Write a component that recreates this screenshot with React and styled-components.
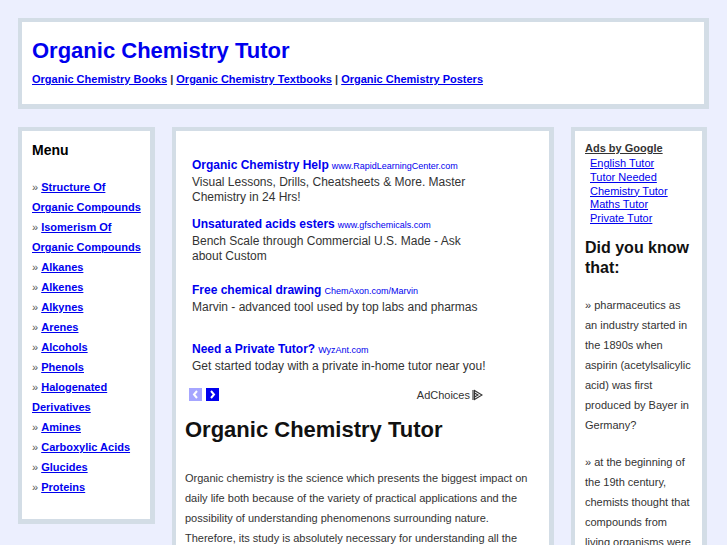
import React from "react";
import styled, { createGlobalStyle } from "styled-components";

const GlobalStyle = createGlobalStyle`
  body {
    margin: 0;
    background: #eceffe;
    font-family: "Liberation Sans", Arial, sans-serif;
    color: #333;
  }
`;

const Page = styled.div`
  width: 691px;
  padding: 18px 0 0 18px;
`;

const Box = styled.div`
  background: #fff;
  border: 5px solid #d3dde6;
  border-top-width: 4px;
  border-left-width: 4px;
`;

const Header = styled(Box)`
  box-sizing: border-box;
  height: 91px;
  padding: 14px 10px 0 10px;
`;

const SiteTitle = styled.h1`
  margin: 0;
  font-size: 22px;
  line-height: 30px;
  font-weight: bold;
  color: #0000ee;
`;

const TopLinks = styled.div`
  margin-top: 7px;
  font-size: 11px;
  font-weight: bold;
  color: #333;
`;

const BlueLink = styled.a`
  color: #0000ee;
  text-decoration: underline;
  font-weight: ${props => (props.plain ? "normal" : "bold")};
`;

const Columns = styled.div`
  display: flex;
  align-items: flex-start;
  gap: 17px;
  margin-top: 18px;
`;

const Sidebar = styled(Box)`
  width: 116px;
  padding: 8px 2px 22px 10px;
`;

const MenuTitle = styled.h3`
  margin: 0;
  font-size: 14px;
  line-height: 22px;
  color: #000;
`;

const MenuList = styled.div`
  margin-top: 16px;
  font-size: 11px;
  line-height: 20px;
`;

const MenuItem = styled.div`
  font-weight: bold;
  &::before {
    content: "» ";
    color: #555;
    font-weight: normal;
  }
`;

const Main = styled(Box)`
  width: 364px;
  height: 420px;
  padding: 15px 0 0 9px;
`;

const AdUnit = styled.div`
  width: 300px;
  padding-top: 5px;
`;

const AdCell = styled.div`
  height: 59px;
  display: flex;
  flex-direction: column;
  justify-content: center;
  padding-left: 7px;
`;

const AdTitle = styled.div`
  font-size: 12px;
  line-height: 17px;
  font-weight: bold;
  color: #0000ee;
  white-space: nowrap;
`;

const AdUrl = styled.span`
  font-size: 9px;
  font-weight: normal;
  color: #0000ee;
  margin-left: 3px;
`;

const AdText = styled.div`
  font-size: 12px;
  line-height: 15px;
  color: #333;
  width: 295px;
`;

const AdFooter = styled.div`
  display: flex;
  align-items: center;
  justify-content: space-between;
  padding: 0 0 0 4px;
  margin-top: 1px;
`;

const Arrows = styled.div`
  display: flex;
  gap: 4px;
`;

const ArrowBox = styled.span`
  width: 13px;
  height: 13px;
  display: flex;
  align-items: center;
  justify-content: center;
  background: ${props => (props.disabled ? "#a6a6ff" : "#0000ee")};
`;

const AdChoices = styled.span`
  display: flex;
  align-items: center;
  gap: 2px;
  font-size: 11px;
  color: #333;
  padding-right: 2px;
`;

const PageTitle = styled.h2`
  margin: 14px 0 0 0;
  font-size: 22px;
  line-height: 30px;
  color: #111;
`;

const BodyText = styled.p`
  margin: 23px 0 0 0;
  font-size: 11px;
  line-height: 20px;
  color: #333;
  width: 350px;
`;

const RightBar = styled(Box)`
  width: 117px;
  height: 420px;
  padding: 10px 0 0 10px;
`;

const AdsHead = styled.div`
  font-size: 11px;
  font-weight: bold;
  text-decoration: underline;
  color: #333;
  line-height: 14px;
`;

const AdLinks = styled.div`
  display: flex;
  flex-direction: column;
  margin-top: 2px;
  padding-left: 5px;
  font-size: 11px;
  line-height: 13.75px;
`;

const KnowTitle = styled.h3`
  margin: 12px 0 0 0;
  font-size: 16px;
  line-height: 20px;
  color: #111;
`;

const Fact = styled.p`
  margin: 17px 0 0 0;
  width: 109px;
  font-size: 11px;
  line-height: 20px;
  color: #333;
  &::before {
    content: "» ";
  }
`;

const Chevron = ({ left }) => (
  <svg width="7" height="9" viewBox="0 0 7 9">
    <path
      d={left ? "M5 1 L2 4.5 L5 8" : "M2 1 L5 4.5 L2 8"}
      stroke="#fff"
      strokeWidth="2"
      fill="none"
    />
  </svg>
);

const AdChoicesIcon = () => (
  <svg width="11" height="12" viewBox="0 0 11 12">
    <path d="M1 1 V11 M2.5 1.5 L10 6 L2.5 10.5 Z M2.5 4 L6 6 L2.5 8" stroke="#333" strokeWidth="1.1" fill="none" />
  </svg>
);

const menu = [
  "Structure Of Organic Compounds",
  "Isomerism Of Organic Compounds",
  "Alkanes",
  "Alkenes",
  "Alkynes",
  "Arenes",
  "Alcohols",
  "Phenols",
  "Halogenated Derivatives",
  "Amines",
  "Carboxylic Acids",
  "Glucides",
  "Proteins"
];

const ads = [
  {
    title: "Organic Chemistry Help",
    url: "www.RapidLearningCenter.com",
    text: "Visual Lessons, Drills, Cheatsheets & More. Master Chemistry in 24 Hrs!"
  },
  {
    title: "Unsaturated acids esters",
    url: "www.gfschemicals.com",
    text: "Bench Scale through Commercial U.S. Made - Ask about Custom"
  },
  {
    title: "Free chemical drawing",
    url: "ChemAxon.com/Marvin",
    text: "Marvin - advanced tool used by top labs and pharmas"
  },
  {
    title: "Need a Private Tutor?",
    url: "WyzAnt.com",
    text: "Get started today with a private in-home tutor near you!"
  }
];

const tutorLinks = [
  "English Tutor",
  "Tutor Needed",
  "Chemistry Tutor",
  "Maths Tutor",
  "Private Tutor"
];

const App = () => {
  return (
    <Page>
      <GlobalStyle />
      <Header>
        <SiteTitle>Organic Chemistry Tutor</SiteTitle>
        <TopLinks>
          <BlueLink href="#">Organic Chemistry Books</BlueLink> |{" "}
          <BlueLink href="#">Organic Chemistry Textbooks</BlueLink> |{" "}
          <BlueLink href="#">Organic Chemistry Posters</BlueLink>
        </TopLinks>
      </Header>
      <Columns>
        <Sidebar>
          <MenuTitle>Menu</MenuTitle>
          <MenuList>
            {menu.map(item => (
              <MenuItem key={item}>
                <BlueLink href="#">{item}</BlueLink>
              </MenuItem>
            ))}
          </MenuList>
        </Sidebar>
        <Main>
          <AdUnit>
            {ads.map(ad => (
              <AdCell key={ad.title}>
                <AdTitle>
                  {ad.title}
                  <AdUrl>{ad.url}</AdUrl>
                </AdTitle>
                <AdText>{ad.text}</AdText>
              </AdCell>
            ))}
            <AdFooter>
              <Arrows>
                <ArrowBox disabled>
                  <Chevron left />
                </ArrowBox>
                <ArrowBox>
                  <Chevron />
                </ArrowBox>
              </Arrows>
              <AdChoices>
                AdChoices <AdChoicesIcon />
              </AdChoices>
            </AdFooter>
          </AdUnit>
          <PageTitle>Organic Chemistry Tutor</PageTitle>
          <BodyText>
            Organic chemistry is the science which presents the biggest impact on
            daily life both because of the variety of practical applications and the
            possibility of understanding phenomenons surrounding nature.
            Therefore, its study is absolutely necessary for understanding all the
            processes that take place in living organisms.
          </BodyText>
        </Main>
        <RightBar>
          <AdsHead>Ads by Google</AdsHead>
          <AdLinks>
            {tutorLinks.map(t => (
              <BlueLink plain href="#" key={t}>
                {t}
              </BlueLink>
            ))}
          </AdLinks>
          <KnowTitle>Did you know that:</KnowTitle>
          <Fact>
            pharmaceutics as an industry started in the 1890s when aspirin
            (acetylsalicylic acid) was first produced by Bayer in Germany?
          </Fact>
          <Fact>
            at the beginning of the 19th century, chemists thought that
            compounds from living organisms were too complex to be synthesized.
          </Fact>
        </RightBar>
      </Columns>
    </Page>
  );
};

export default App;
